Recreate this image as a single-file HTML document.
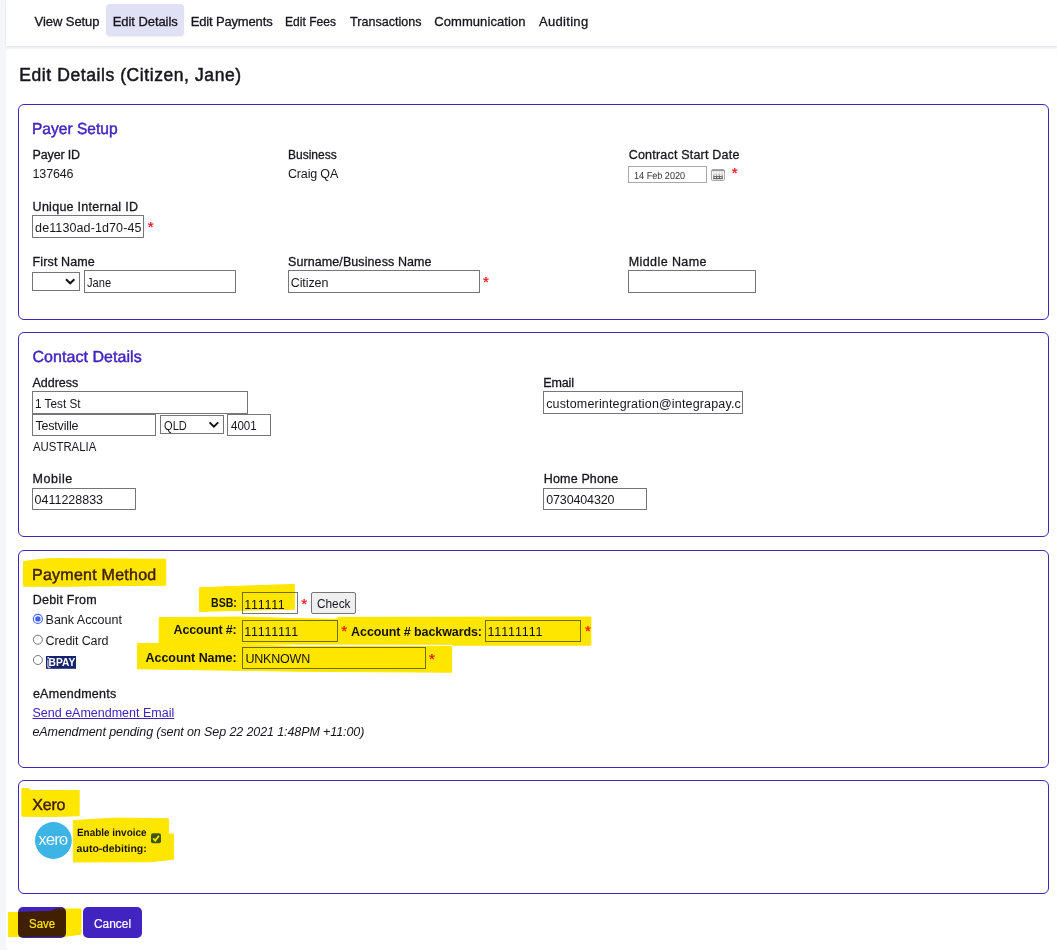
<!DOCTYPE html><html><head><meta charset="utf-8"><title>Edit Details</title><style>

html,body{margin:0;padding:0;}
body{width:1057px;height:950px;position:relative;overflow:hidden;background:#f5f6f9;font-family:"Liberation Sans",sans-serif;color:#16161e;}
.t{position:absolute;white-space:nowrap;line-height:0;}
.bx{position:absolute;box-sizing:border-box;}
.in{border:1px solid #767676;background:#fff;border-radius:0;}
.fs{border:1px solid #4023c0;border-radius:6px;background:#fff;}
.star{position:absolute;color:#f01018;font-size:15px;line-height:0;font-weight:normal;-webkit-text-stroke:0.25px #f01018;}
svg{position:absolute;overflow:visible;}
#hl{mix-blend-mode:multiply;left:0;top:0;}

</style></head><body>
<div class="bx" style="left:6px;top:0px;width:1051px;height:45.6px;background:#fff;box-shadow:0 1px 2px rgba(40,45,80,0.10);"></div>
<div class="bx" style="left:106px;top:4px;width:78px;height:32px;background:#e1e1f6;border-radius:4px;box-shadow:0 1px 2px rgba(40,45,80,0.08);"></div>
<div class="bx" style="left:6px;top:48.6px;width:1051px;height:901px;background:#fff;border-radius:4px 0 0 4px;"></div>
<div class="bx fs" style="left:18px;top:104px;width:1031px;height:216px;"></div>
<div class="bx fs" style="left:18px;top:332px;width:1031px;height:205px;"></div>
<div class="bx fs" style="left:18px;top:550px;width:1031px;height:217.5px;"></div>
<div class="bx fs" style="left:18px;top:780px;width:1031px;height:114px;"></div>
<div class="bx in" style="left:32px;top:215px;width:112px;height:22.5px;"></div>
<div class="bx in" style="left:32px;top:272px;width:48px;height:19px;"></div>
<div class="bx in" style="left:84px;top:270px;width:152px;height:22.5px;"></div>
<div class="bx in" style="left:288px;top:270px;width:192px;height:22.5px;"></div>
<div class="bx in" style="left:628px;top:270px;width:128px;height:22.5px;"></div>
<div class="bx in" style="left:628px;top:166px;width:79px;height:17px;border-color:#a9a9a9;"></div>
<div class="bx in" style="left:32px;top:391px;width:216px;height:22.5px;"></div>
<div class="bx in" style="left:32px;top:414px;width:124px;height:22px;"></div>
<div class="bx in" style="left:160px;top:415px;width:64px;height:19px;"></div>
<div class="bx in" style="left:227px;top:414px;width:44px;height:22px;"></div>
<div class="bx in" style="left:32px;top:488px;width:104px;height:22px;"></div>
<div class="bx in" style="left:543px;top:391px;width:200px;height:22.5px;"></div>
<div class="bx in" style="left:543px;top:488px;width:104px;height:22px;"></div>
<div class="bx in" style="left:242px;top:592px;width:55.5px;height:22px;"></div>
<div class="bx in" style="left:311px;top:592px;width:45px;height:22px;background:#efefef;border-radius:2px;"></div>
<div class="bx in" style="left:242px;top:619.5px;width:96px;height:22px;"></div>
<div class="bx in" style="left:485px;top:619.5px;width:96px;height:22px;"></div>
<div class="bx in" style="left:242px;top:647px;width:184px;height:22px;"></div>
<div class="bx" style="left:18px;top:907px;width:48px;height:31px;background:#4023c0;border-radius:5px;"></div>
<div class="bx" style="left:83px;top:907px;width:59px;height:31px;background:#4023c0;border-radius:5px;"></div>
<svg id="ic" width="1057" height="950" viewBox="0 0 1057 950" style="left:0;top:0;">
<defs>
<linearGradient id="cg" x1="0" y1="0" x2="0" y2="1"><stop offset="0" stop-color="#f0f0f0"/><stop offset="0.4" stop-color="#c4c4c4"/><stop offset="0.6" stop-color="#747474"/><stop offset="1" stop-color="#505050"/></linearGradient>
</defs>
<!-- select chevrons -->
<path d="M66 279.2 L70.2 283.3 L74.4 279.2" fill="none" stroke="#111" stroke-width="1.9"/>
<path d="M209.6 422.4 L213.9 426.6 L218.2 422.4" fill="none" stroke="#111" stroke-width="1.9"/>
<!-- calendar icon -->
<rect x="711.5" y="169.5" width="13" height="11" rx="1.5" fill="#fff" stroke="#a8a8a8"/>
<rect x="712" y="169.6" width="12" height="1.7" fill="#9a9a9a"/>
<rect x="713.2" y="171.6" width="9.6" height="7.6" fill="url(#cg)"/>
<rect x="714.4" y="172" width="1.5" height="2.4" fill="#fff" opacity="0.85"/><rect x="714.4" y="174.9" width="1.5" height="1.1" fill="#fff"/><rect x="714.4" y="177" width="1.5" height="1.1" fill="#fff"/><rect x="717.2" y="172" width="1.5" height="2.4" fill="#fff" opacity="0.85"/><rect x="717.2" y="174.9" width="1.5" height="1.1" fill="#fff"/><rect x="717.2" y="177" width="1.5" height="1.1" fill="#fff"/><rect x="720.0" y="172" width="1.5" height="2.4" fill="#fff" opacity="0.85"/><rect x="720.0" y="174.9" width="1.5" height="1.1" fill="#fff"/><rect x="720.0" y="177" width="1.5" height="1.1" fill="#fff"/>
<!-- radios -->
<circle cx="37.9" cy="618.9" r="4.5" fill="#fff" stroke="#4666ff" stroke-width="1.1"/>
<circle cx="37.9" cy="618.9" r="2.7" fill="#3f5fff"/>
<circle cx="37.9" cy="639.7" r="4.5" fill="#fff" stroke="#767676" stroke-width="1"/>
<circle cx="37.9" cy="660" r="4.5" fill="#fff" stroke="#767676" stroke-width="1"/>
<!-- BPAY -->
<rect x="46" y="656" width="30" height="12.8" fill="#16246f"/>
<rect x="47.5" y="657.2" width="1.5" height="1.4" fill="#fff"/>
<path d="M47.9 659.8 V667.3 H50.5" fill="none" stroke="#fff" stroke-width="0.9"/>
<text x="48.6" y="666" font-family="Liberation Sans, sans-serif" font-weight="bold" font-size="10.3" fill="#fff" textLength="26.6" lengthAdjust="spacingAndGlyphs">BPAY</text>
<!-- Xero logo -->
<circle cx="53.4" cy="840.5" r="18.4" fill="#3cb4e6"/>
<text x="38.3" y="844.9" font-family="Liberation Sans, sans-serif" font-size="17" fill="#fff" stroke="#3cb4e6" stroke-width="0.1" textLength="30" lengthAdjust="spacing">xero</text>
<circle cx="63.2" cy="840.4" r="0.9" fill="#fff"/>
<!-- checkbox -->
<rect x="151" y="833.2" width="10" height="10" rx="2" fill="#4060ff"/>
<path d="M153.2 838.4 L155.3 840.6 L158.9 835.8" fill="none" stroke="#fff" stroke-width="1.7"/>
</svg>

<span class="t" id="t0" style="left:34.6px;top:22.00px;font-size:13px;letter-spacing:-0.073px;-webkit-text-stroke:0.3px currentColor;">View Setup</span>
<span class="t" id="t1" style="left:112.7px;top:22.00px;font-size:13px;letter-spacing:-0.062px;-webkit-text-stroke:0.3px currentColor;">Edit Details</span>
<span class="t" id="t2" style="left:190.7px;top:22.00px;font-size:13px;letter-spacing:-0.156px;-webkit-text-stroke:0.3px currentColor;">Edit Payments</span>
<span class="t" id="t3" style="left:285.2px;top:22.00px;font-size:13px;letter-spacing:0.000px;transform:scaleX(0.9286);transform-origin:0 0;-webkit-text-stroke:0.3px currentColor;">Edit Fees</span>
<span class="t" id="t4" style="left:349.5px;top:22.00px;font-size:13px;letter-spacing:0.000px;transform:scaleX(0.9670);transform-origin:0 0;-webkit-text-stroke:0.3px currentColor;">Transactions</span>
<span class="t" id="t5" style="left:434.2px;top:22.00px;font-size:13px;letter-spacing:0.082px;-webkit-text-stroke:0.3px currentColor;">Communication</span>
<span class="t" id="t6" style="left:538.9px;top:22.00px;font-size:13px;letter-spacing:0.327px;-webkit-text-stroke:0.3px currentColor;">Auditing</span>
<span class="t" id="t7" style="left:19.3px;top:75.00px;font-size:17.5px;letter-spacing:0.578px;-webkit-text-stroke:0.5px currentColor;">Edit Details (Citizen, Jane)</span>
<span class="t" id="t8" style="left:31.9px;top:130.00px;font-size:16px;letter-spacing:0.000px;transform:scaleX(0.9720);transform-origin:0 0;color:#4023c0;-webkit-text-stroke:0.45px currentColor;text-rendering:geometricPrecision;">Payer Setup</span>
<span class="t" id="t9" style="left:32.6px;top:155.00px;font-size:12.5px;letter-spacing:-0.168px;-webkit-text-stroke:0.3px currentColor;">Payer ID</span>
<span class="t" id="t10" style="left:32.6px;top:174.00px;font-size:12.5px;letter-spacing:-0.186px;">137646</span>
<span class="t" id="t11" style="left:288px;top:155.00px;font-size:12.5px;letter-spacing:0.000px;transform:scaleX(0.9599);transform-origin:0 0;-webkit-text-stroke:0.3px currentColor;">Business</span>
<span class="t" id="t12" style="left:288px;top:174.00px;font-size:12.5px;letter-spacing:-0.163px;">Craig QA</span>
<span class="t" id="t13" style="left:628.7px;top:155.00px;font-size:12.5px;letter-spacing:0.205px;-webkit-text-stroke:0.3px currentColor;">Contract Start Date</span>
<span class="t" id="t14" style="left:633.9px;top:177.00px;font-size:10.2px;letter-spacing:0.000px;transform:scaleX(0.8931);transform-origin:0 0;color:#333;text-rendering:geometricPrecision;">14 Feb 2020</span>
<span class="t" id="t15" style="left:32.6px;top:207.00px;font-size:12.5px;letter-spacing:0.269px;-webkit-text-stroke:0.3px currentColor;">Unique Internal ID</span>
<span class="t" id="t16" style="left:35.1px;top:228.00px;font-size:12.5px;letter-spacing:0.110px;">de1130ad-1d70-45</span>
<span class="t" id="t17" style="left:32.6px;top:262.00px;font-size:12.5px;letter-spacing:0.117px;-webkit-text-stroke:0.3px currentColor;">First Name</span>
<span class="t" id="t18" style="left:86.8px;top:283.00px;font-size:12.5px;letter-spacing:0.000px;transform:scaleX(0.8890);transform-origin:0 0;">Jane</span>
<span class="t" id="t19" style="left:288px;top:262.00px;font-size:12.5px;letter-spacing:0.089px;-webkit-text-stroke:0.3px currentColor;">Surname/Business Name</span>
<span class="t" id="t20" style="left:290.7px;top:283.00px;font-size:12.5px;letter-spacing:-0.088px;">Citizen</span>
<span class="t" id="t21" style="left:628.7px;top:262.00px;font-size:12.5px;letter-spacing:0.414px;-webkit-text-stroke:0.3px currentColor;">Middle Name</span>
<span class="t" id="t22" style="left:32.5px;top:358.00px;font-size:16px;letter-spacing:0.047px;color:#4023c0;-webkit-text-stroke:0.45px currentColor;text-rendering:geometricPrecision;">Contact Details</span>
<span class="t" id="t23" style="left:32.5px;top:383.00px;font-size:12.5px;letter-spacing:-0.037px;-webkit-text-stroke:0.3px currentColor;">Address</span>
<span class="t" id="t24" style="left:35.4px;top:404.00px;font-size:12.5px;letter-spacing:0.000px;transform:scaleX(0.9417);transform-origin:0 0;">1 Test St</span>
<span class="t" id="t25" style="left:35.4px;top:426.00px;font-size:12.5px;letter-spacing:-0.174px;">Testville</span>
<span class="t" id="t26" style="left:164.2px;top:426.00px;font-size:12.5px;letter-spacing:0.000px;transform:scaleX(0.8871);transform-origin:0 0;">QLD</span>
<span class="t" id="t27" style="left:230.7px;top:426.00px;font-size:12.5px;letter-spacing:0.000px;transform:scaleX(0.9240);transform-origin:0 0;">4001</span>
<span class="t" id="t28" style="left:32.5px;top:447.00px;font-size:12.5px;letter-spacing:0.000px;transform:scaleX(0.9112);transform-origin:0 0;">AUSTRALIA</span>
<span class="t" id="t29" style="left:32.5px;top:479.00px;font-size:12.5px;letter-spacing:0.579px;-webkit-text-stroke:0.3px currentColor;">Mobile</span>
<span class="t" id="t30" style="left:34.6px;top:500.00px;font-size:12.5px;letter-spacing:-0.019px;">0411228833</span>
<span class="t" id="t31" style="left:543.2px;top:383.00px;font-size:12.5px;letter-spacing:-0.133px;-webkit-text-stroke:0.3px currentColor;">Email</span>
<span class="t" id="t32" style="left:546.2px;top:404.00px;font-size:12.5px;letter-spacing:0.161px;">customerintegration@integrapay.c</span>
<span class="t" id="t33" style="left:543.8px;top:479.00px;font-size:12.5px;letter-spacing:0.153px;-webkit-text-stroke:0.3px currentColor;">Home Phone</span>
<span class="t" id="t34" style="left:546.2px;top:500.00px;font-size:12.5px;letter-spacing:-0.133px;">0730404320</span>
<span class="t" id="t35" style="left:32.0px;top:576.00px;font-size:16px;letter-spacing:0.253px;color:#4023c0;-webkit-text-stroke:0.45px currentColor;text-rendering:geometricPrecision;">Payment Method</span>
<span class="t" id="t36" style="left:32.7px;top:600.00px;font-size:12.5px;letter-spacing:0.247px;-webkit-text-stroke:0.3px currentColor;">Debit From</span>
<span class="t" id="t37" style="left:45.6px;top:620.00px;font-size:12.5px;letter-spacing:-0.013px;">Bank Account</span>
<span class="t" id="t38" style="left:45.6px;top:641.00px;font-size:12.5px;letter-spacing:-0.111px;">Credit Card</span>
<span class="t" id="t39" style="left:210.7px;top:603.00px;font-size:12.5px;letter-spacing:0.000px;transform:scaleX(0.8474);transform-origin:0 0;font-weight:bold;">BSB:</span>
<span class="t" id="t40" style="left:173.5px;top:630.00px;font-size:12.5px;letter-spacing:-0.149px;font-weight:bold;">Account #:</span>
<span class="t" id="t41" style="left:145.6px;top:658.00px;font-size:12.5px;letter-spacing:-0.053px;font-weight:bold;">Account Name:</span>
<span class="t" id="t42" style="left:244.3px;top:605.00px;font-size:12.5px;letter-spacing:0.687px;">111111</span>
<span class="t" id="t43" style="left:316.9px;top:604.00px;font-size:12.5px;letter-spacing:0.000px;transform:scaleX(0.9453);transform-origin:0 0;">Check</span>
<span class="t" id="t44" style="left:244.3px;top:632.00px;font-size:12.5px;letter-spacing:0.697px;">11111111</span>
<span class="t" id="t45" style="left:351.1px;top:632.00px;font-size:12.5px;letter-spacing:-0.094px;font-weight:bold;">Account # backwards:</span>
<span class="t" id="t46" style="left:487.5px;top:632.00px;font-size:12.5px;letter-spacing:0.834px;">11111111</span>
<span class="t" id="t47" style="left:245.4px;top:659.00px;font-size:12.5px;letter-spacing:-0.196px;">UNKNOWN</span>
<span class="t" id="t48" style="left:32.9px;top:694.00px;font-size:12.5px;letter-spacing:0.281px;-webkit-text-stroke:0.3px currentColor;">eAmendments</span>
<span class="t" id="t49" style="left:32.5px;top:713.00px;font-size:12.5px;letter-spacing:-0.002px;color:#4023c0;text-decoration:underline;">Send eAmendment Email</span>
<span class="t" id="t50" style="left:32.5px;top:732.00px;font-size:12.5px;letter-spacing:-0.101px;font-style:italic;">eAmendment pending (sent on Sep 22 2021 1:48PM +11:00)</span>
<span class="t" id="t51" style="left:32.3px;top:806.00px;font-size:16px;letter-spacing:-0.199px;color:#4023c0;-webkit-text-stroke:0.45px currentColor;text-rendering:geometricPrecision;">Xero</span>
<span class="t" id="t52" style="left:76.6px;top:833.00px;font-size:10.5px;letter-spacing:0.000px;transform:scaleX(0.9452);transform-origin:0 0;font-weight:bold;text-rendering:geometricPrecision;">Enable invoice</span>
<span class="t" id="t53" style="left:76.6px;top:849.00px;font-size:10.5px;letter-spacing:0.015px;font-weight:bold;text-rendering:geometricPrecision;">auto-debiting:</span>
<span class="t" id="t54" style="left:29px;top:924.00px;font-size:12.5px;letter-spacing:0.000px;transform:scaleX(0.9158);transform-origin:0 0;color:#fff;-webkit-text-stroke:0.2px #fff;">Save</span>
<span class="t" id="t55" style="left:94px;top:924.00px;font-size:12.5px;letter-spacing:0.000px;transform:scaleX(0.9532);transform-origin:0 0;color:#fff;-webkit-text-stroke:0.2px #fff;">Cancel</span>
<span class="star" style="left:147.70000000000002px;top:227.0px;">*</span>
<span class="star" style="left:482.9px;top:282.3px;">*</span>
<span class="star" style="left:731.6999999999999px;top:173.3px;">*</span>
<span class="star" style="left:301.29999999999995px;top:604.0px;">*</span>
<span class="star" style="left:341.2px;top:630.8px;">*</span>
<span class="star" style="left:584.9px;top:631.2px;">*</span>
<span class="star" style="left:429.0px;top:658.8px;">*</span>
<svg id="hl" width="1057" height="950" viewBox="0 0 1057 950">
<g fill="#ffe600" stroke="#ffe600" stroke-width="1" stroke-linejoin="round">
<path d="M23.4 561.6 L38 559.6 L52 558.6 L165.8 559.2 L165.8 585.2 L120 585.6 L70 586.2 L23.4 586.2 Z"/>
<path d="M199.4 587.8 L240 586.2 L294.3 584.4 L294.3 609.3 L242 610.3 L199.4 611.4 Z"/>
<path d="M159.2 617.6 L240 617 L296 618.6 L336 619.3 L338.5 617.3 L590.9 617 L590.9 645.2 L452 645.2 L451.6 644.3 L232 644 L159.2 645 Z"/>
<path d="M137.4 643.6 L160 643.4 L232 644.4 L300 646.6 L451.6 646.6 L451.6 672.2 L300 671.3 L137.4 668.8 Z"/>
<path d="M21.9 788.6 L29 788.6 L31 790.6 L79.2 790.4 L79.2 815.8 L50 816.6 L21.9 816.2 Z"/>
<path d="M73.3 820.6 L116 818 L168.6 818.8 L168.6 834 L173.6 834 L173.6 859.3 L150 861.8 L73.3 862 Z"/>
<path d="M8.4 912.6 L50 911.4 L57 909 L81 908.9 L81 934.2 L66 936.2 L8.4 936.5 Z"/>
</g>
</svg>

</body></html>
